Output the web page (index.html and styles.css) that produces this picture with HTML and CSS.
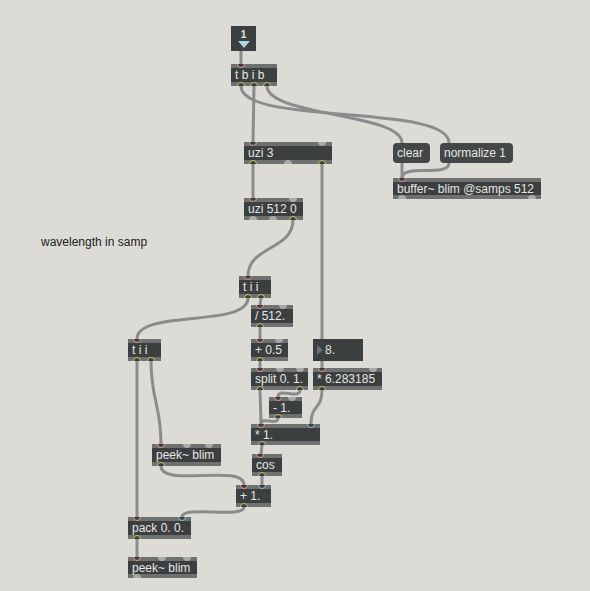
FILE: index.html
```html
<!DOCTYPE html>
<html lang="en">

<head>
  <meta charset="UTF-8">
  <title>blim patcher</title>
  <link rel="stylesheet" href="styles.css">
</head>

<body>
  <div class="patcher">
    <svg class="cords" width="590" height="591" viewBox="0 0 590 591">
      <path d="M241 51 L241 64" />
      <path d="M241 86 C241 126, 449 103, 449 143" />
      <path d="M267 86 C267 116, 402 113, 402 143" />
      <path d="M254 86 L253 142" />
      <path d="M402 163 L402 178" />
      <path d="M449 163 C449 178, 402 163, 402 178" />
      <path d="M253 164 L253 198" />
      <path d="M322 164 L322 368" />
      <path d="M293 220 C293 250, 248 246, 248 276" />
      <path d="M248 298 C248 328, 137 309, 137 339" />
      <path d="M261 298 L260 305" />
      <path d="M260 327 L260 339" />
      <path d="M260 361 L260 368" />
      <path d="M260 390 L261 424" />
      <path d="M300 390 C300 400, 278 387, 278 397" />
      <path d="M278 418 C278 426, 261 416, 261 424" />
      <path d="M322 390 C322 410, 311 404, 311 424" />
      <path d="M262 445 L261 454" />
      <path d="M262 476 L262 485" />
      <path d="M137 361 L137 517" />
      <path d="M151 361 C151 400, 161 405, 161 444" />
      <path d="M161 466 C161 488, 244 463, 244 485" />
      <path d="M244 507 C244 519, 182 505, 182 517" />
      <path d="M137 539 L137 557" />
    </svg>

    <div class="number" style="left:231px;top:26px">
      <span class="number-value">1</span>
      <span class="number-arrow"></span>
    </div>

    <div class="obj" style="left:231px;top:64px;width:46px">t b i b
      <span class="io inlet hot" style="left:10px"></span>
      <span class="io outlet on" style="left:10px"></span>
      <span class="io outlet on" style="left:23px"></span>
      <span class="io outlet on" style="left:36px"></span>
    </div>

    <div class="obj" style="left:244px;top:142px;width:88px">uzi 3
      <span class="io inlet hot" style="left:9px"></span>
      <span class="io inlet" style="left:78px"></span>
      <span class="io outlet on" style="left:9px"></span>
      <span class="io outlet" style="left:44px"></span>
      <span class="io outlet on" style="left:78px"></span>
    </div>

    <div class="msg" style="left:393px;top:143px;width:37px">clear</div>
    <div class="msg" style="left:440px;top:143px;width:73px">normalize 1</div>

    <div class="obj" style="left:393px;top:178px;width:148px;height:21px">buffer~ blim @samps 512
      <span class="io inlet hot" style="left:9px"></span>
      <span class="io outlet" style="left:9px"></span>
      <span class="io outlet" style="left:139px"></span>
    </div>

    <div class="obj" style="left:244px;top:198px;width:59px">uzi 512 0
      <span class="io inlet hot" style="left:9px"></span>
      <span class="io inlet" style="left:49px"></span>
      <span class="io outlet" style="left:9px"></span>
      <span class="io outlet" style="left:29px"></span>
      <span class="io outlet on" style="left:49px"></span>
    </div>

    <p class="comment" style="left:41px;top:235px">wavelength in samp</p>

    <div class="obj" style="left:239px;top:276px;width:32px">t i i
      <span class="io inlet hot" style="left:9px"></span>
      <span class="io outlet on" style="left:9px"></span>
      <span class="io outlet on" style="left:22px"></span>
    </div>

    <div class="obj" style="left:251px;top:305px;width:42px">/ 512.
      <span class="io inlet hot" style="left:9px"></span>
      <span class="io inlet" style="left:32px"></span>
      <span class="io outlet on" style="left:9px"></span>
    </div>

    <div class="obj" style="left:128px;top:339px;width:33px">t i i
      <span class="io inlet hot" style="left:9px"></span>
      <span class="io outlet on" style="left:9px"></span>
      <span class="io outlet on" style="left:23px"></span>
    </div>

    <div class="obj" style="left:251px;top:339px;width:37px">+ 0.5
      <span class="io inlet hot" style="left:9px"></span>
      <span class="io inlet" style="left:28px"></span>
      <span class="io outlet on" style="left:9px"></span>
    </div>

    <div class="flonum" style="left:313px;top:339px;width:50px">8.</div>

    <div class="obj" style="left:251px;top:368px;width:57px">split 0. 1.
      <span class="io inlet hot" style="left:9px"></span>
      <span class="io inlet" style="left:29px"></span>
      <span class="io inlet" style="left:49px"></span>
      <span class="io outlet on" style="left:9px"></span>
      <span class="io outlet on" style="left:49px"></span>
    </div>

    <div class="obj" style="left:313px;top:368px;width:69px">* 6.283185
      <span class="io inlet hot" style="left:9px"></span>
      <span class="io inlet" style="left:60px"></span>
      <span class="io outlet on" style="left:9px"></span>
    </div>

    <div class="obj" style="left:269px;top:397px;width:33px;height:21px">- 1.
      <span class="io inlet hot" style="left:9px"></span>
      <span class="io inlet" style="left:23px"></span>
      <span class="io outlet on" style="left:9px"></span>
    </div>

    <div class="obj" style="left:251px;top:424px;width:69px;height:21px">* 1.
      <span class="io inlet hot" style="left:10px"></span>
      <span class="io inlet cold" style="left:60px"></span>
      <span class="io outlet on" style="left:11px"></span>
    </div>

    <div class="obj" style="left:152px;top:444px;width:69px">peek~ blim
      <span class="io inlet hot" style="left:9px"></span>
      <span class="io inlet" style="left:35px"></span>
      <span class="io inlet" style="left:57px"></span>
      <span class="io outlet on" style="left:9px"></span>
    </div>

    <div class="obj" style="left:252px;top:454px;width:30px">cos
      <span class="io inlet hot" style="left:8px"></span>
      <span class="io outlet on" style="left:10px"></span>
    </div>

    <div class="obj" style="left:236px;top:485px;width:35px">+ 1.
      <span class="io inlet hot" style="left:8px"></span>
      <span class="io inlet cold" style="left:26px"></span>
      <span class="io outlet on" style="left:8px"></span>
    </div>

    <div class="obj" style="left:128px;top:517px;width:63px">pack 0. 0.
      <span class="io inlet hot" style="left:9px"></span>
      <span class="io inlet cold" style="left:54px"></span>
      <span class="io outlet on" style="left:9px"></span>
    </div>

    <div class="obj" style="left:128px;top:557px;width:69px;height:21px">peek~ blim
      <span class="io inlet hot" style="left:9px"></span>
      <span class="io inlet" style="left:34px"></span>
      <span class="io inlet" style="left:59px"></span>
      <span class="io outlet" style="left:9px"></span>
    </div>
  </div>
</body>

</html>
```

FILE: styles.css
```css
html,
body {
  margin: 0;
  width: 100%;
  height: 100%;
  overflow: hidden;
  background-color: #dcdbd6;
  font-family: "Liberation Sans", Arial, sans-serif;
}

.patcher {
  position: relative;
  width: 590px;
  height: 591px;
}

.cords {
  position: absolute;
  left: 0;
  top: 0;
}

.cords path {
  fill: none;
  stroke: #8b8b8b;
  stroke-width: 3;
  stroke-linecap: round;
}

.obj,
.msg,
.flonum,
.number {
  position: absolute;
  box-sizing: border-box;
  color: #e6e6e6;
  font-size: 12px;
  white-space: nowrap;
  overflow: hidden;
}

.obj {
  height: 22px;
  padding: 4px 0 0 4px;
  line-height: 14px;
  background: linear-gradient(#6f7171 0 4px, #3c3f3f 4px calc(100% - 4px), #6f7171 0);
}

.msg {
  height: 20px;
  padding-left: 4px;
  line-height: 20px;
  border-radius: 4px;
  background-color: #444747;
}

.flonum {
  height: 22px;
  padding-left: 12px;
  line-height: 22px;
  background-color: #3c3f3f;
}

.flonum::before {
  content: "";
  position: absolute;
  left: 4px;
  top: 6px;
  border-left: 6px solid #6c6f6f;
  border-top: 5px solid transparent;
  border-bottom: 5px solid transparent;
}

.number {
  width: 25px;
  height: 25px;
  background-color: #3c3f3f;
}

.number-value {
  position: absolute;
  left: 0;
  right: 0;
  top: 3px;
  text-align: center;
  font-size: 10px;
  font-weight: bold;
  line-height: 11px;
}

.number-arrow {
  position: absolute;
  left: 7px;
  top: 15px;
  border-top: 7px solid #a8dbe4;
  border-left: 6px solid transparent;
  border-right: 6px solid transparent;
}

/* inlets and outlets */
.io {
  position: absolute;
  width: 8px;
  height: 8px;
  margin-left: -4px;
  box-sizing: border-box;
  border-radius: 50%;
  background-color: #a9abab;
}

.inlet {
  top: -4px;
}

.outlet {
  bottom: -4px;
}

.inlet.hot,
.inlet.cold,
.outlet.on {
  background-color: #3c3f3f;
  border: 1.5px solid #e59b8c;
}

.inlet.cold {
  border-color: #86c9d9;
}

.outlet.on {
  border-color: #c9c56a;
}

.comment {
  position: absolute;
  margin: 0;
  font-size: 12px;
  line-height: 14px;
  color: #222;
}
```
